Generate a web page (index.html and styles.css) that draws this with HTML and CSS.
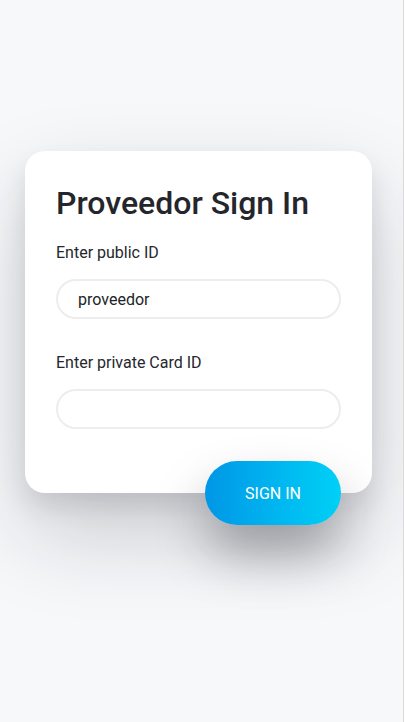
FILE: index.html
```html
<!DOCTYPE html>
<html lang="es">
<head>
<meta charset="utf-8">
<title>Proveedor Sign In</title>
<link rel="stylesheet" href="styles.css">
</head>
<body>
<div class="page">
  <form class="card">
    <h1 class="title">Proveedor Sign In</h1>
    <label class="label">Enter public ID</label>
    <input class="field" type="text" value="proveedor">
    <label class="label label-second">Enter private Card ID</label>
    <input class="field" type="password" value="">
    <button class="signin" type="button">SIGN IN</button>
  </form>
</div>
</body>
</html>
```

FILE: styles.css
```css
html, body {
  margin: 0;
  padding: 0;
  background: #ffffff;
}
body {
  font-family: Roboto, "Liberation Sans", sans-serif;
  color: #222429;
}
.page {
  box-sizing: border-box;
  width: 404px;
  height: 722px;
  background: #f7f8fa;
  border-right: 1px solid #d9dadc;
  padding-top: 151px;
  padding-left: 25px;
  overflow: hidden;
}
.card {
  position: relative;
  box-sizing: border-box;
  width: 347px;
  height: 342px;
  background: #ffffff;
  border-radius: 20px;
  padding: 32px 31px 0 31px;
  box-shadow: 0 40px 90px rgba(20, 24, 35, 0.2), 0 14px 24px rgba(20, 24, 35, 0.1);
  display: flex;
  flex-direction: column;
}
.title {
  margin: 0;
  font-size: 32px;
  font-weight: 500;
  line-height: 40px;
  color: #24262b;
}
.label {
  display: block;
  margin-top: 20px;
  font-size: 16px;
  line-height: 20px;
  color: #25272c;
}
.label-second {
  margin-top: 34px;
}
.field {
  box-sizing: border-box;
  margin-top: 16px;
  width: 285px;
  height: 40px;
  border: 2px solid #ededed;
  border-radius: 20px;
  padding: 0 20px;
  font-family: Roboto, "Liberation Sans", sans-serif;
  font-size: 16px;
  color: #222429;
  background: #ffffff;
  outline: none;
}
.signin {
  position: absolute;
  left: 180px;
  top: 310px;
  width: 136px;
  height: 64px;
  border: none;
  border-radius: 32px;
  background: linear-gradient(90deg, #0096e6 0%, #00b7f0 55%, #00d0f6 100%);
  color: #ffffff;
  font-family: Roboto, "Liberation Sans", sans-serif;
  font-size: 16px;
  font-weight: 400;
  box-shadow: 0 30px 50px rgba(20, 24, 35, 0.34);
  cursor: pointer;
}
```
